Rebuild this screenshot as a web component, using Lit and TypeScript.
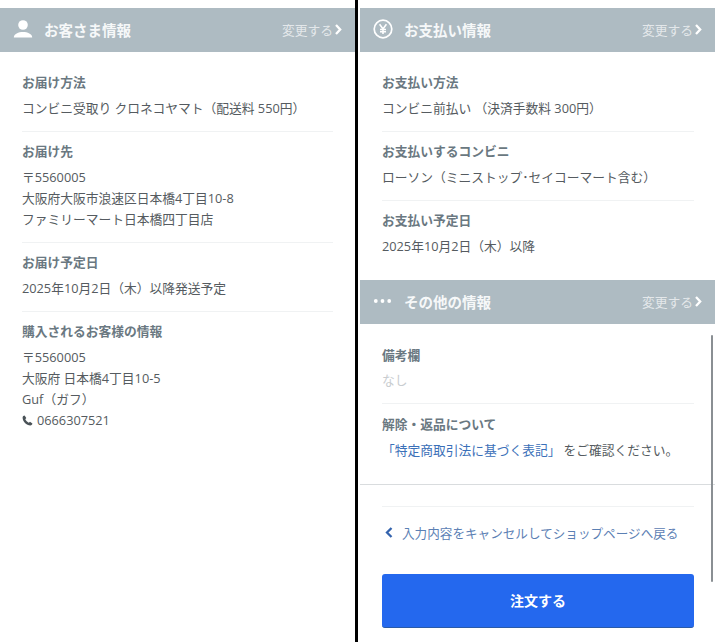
import { LitElement, html, css, nothing, TemplateResult } from 'lit';
import { customElement, property } from 'lit/decorators.js';

const userIcon = html`<svg width="20" height="20" viewBox="0 0 20 20" fill="#fff">
  <circle cx="10" cy="6" r="4.800" />
  <path d="M.8 18.500c0-3.800 4.700-5.600 9.200-5.600s9.200 1.800 9.200 5.600z" />
</svg>`;

const yenIcon = html`<svg width="20" height="20" viewBox="0 0 20 20" fill="none" stroke="#fff">
  <circle cx="10" cy="10" r="8.800" stroke-width="1.700" />
  <path d="M6.600 5.300 10 10l3.400-4.700M10 10v5M7 10.500h6M7 12.700h6" stroke-width="1.600" />
</svg>`;

const dotsIcon = html`<svg width="20" height="20" viewBox="0 0 20 20" fill="#fff">
  <circle cx="2.800" cy="10" r="1.900" />
  <circle cx="9.500" cy="10" r="1.900" />
  <circle cx="16.200" cy="10" r="1.900" />
</svg>`;

const phoneIcon = html`<svg class="phone" width="11" height="11" viewBox="0 0 11 11" fill="#4a5257">
  <path d="M2.600.6 4.300 3 3.300 4.200c.6 1.400 2 2.800 3.500 3.500L8 6.700l2.400 1.700c0 .9-.9 2-2 2C4.400 10.400.6 6.600.6 2.600c0-1.100 1.100-2 2-2z" />
</svg>`;

@customElement('info-section')
export class InfoSection extends LitElement {
  static styles = css`
    :host {
      display: block;
    }
    .head {
      height: 44px;
      box-sizing: border-box;
      background: #aebbc2;
      display: flex;
      align-items: center;
      padding: 0 13px 2px;
      color: #fff;
    }
    .head svg {
      flex: none;
    }
    .title {
      margin-left: 11px;
      font-size: 14.5px;
      font-weight: 700;
      flex: 1;
      color: #f6f8f9;
    }
    .change {
      font-size: 12.750px;
      color: rgba(255, 255, 255, 0.68);
      display: flex;
      align-items: center;
      gap: 2px;
    }
    .change svg {
      display: block;
    }
  `;

  @property() heading = '';
  @property({ attribute: false }) icon: TemplateResult | typeof nothing = nothing;

  render() {
    return html`
      <div class="head">
        ${this.icon}
        <span class="title">${this.heading}</span>
        <span class="change">
          変更する
          <svg width="7" height="11" viewBox="0 0 7 11" fill="none" stroke="#fff" stroke-width="2.300">
            <path d="M1 1 5.200 5.500 1 10" />
          </svg>
        </span>
      </div>
      <slot></slot>
    `;
  }
}

@customElement('app-root')
export class AppRoot extends LitElement {
  static styles = css`
    :host {
      display: block;
      width: 715px;
      height: 642px;
      overflow: hidden;
      font-family: 'Open Sans', 'Noto Sans CJK JP', sans-serif;
      font-size: 12px;
      color: #555b60;
      background: #fff;
    }
    .page {
      display: grid;
      grid-template-columns: 355px 360px;
      height: 642px;
    }
    .pane {
      padding-top: 8px;
      position: relative;
      height: 634px;
    }
    .pane.right {
      border-left: 3px solid #000;
      padding-left: 2px;
    }
    .body {
      padding: 20px 22px 0;
    }
    .right .body {
      padding-right: 21px;
    }
    .row {
      padding-bottom: 12px;
      margin-bottom: 9px;
      border-bottom: 1px solid #f0f2f3;
    }
    .row.last {
      border-bottom: 0;
      padding-bottom: 0;
      margin-bottom: 0;
    }
    .label {
      font-size: 12.750px;
      font-weight: 700;
      color: #6a7881;
      line-height: 21px;
      margin-bottom: 5px;
    }
    .value {
      font-size: 12.750px;
      line-height: 21px;
    }
    .muted {
      color: #c9cdd0;
    }
    a {
      color: #3b70b8;
      text-decoration: none;
    }
    .note {
      margin-left: 3px;
    }
    .phone {
      margin-right: 4px;
      vertical-align: -1px;
    }
    .others {
      margin-top: 23px;
    }
    .right .others .body {
      padding-top: 21px;
    }
    .others .row {
      margin-bottom: 10px;
    }
    .others .row:first-child .label {
      margin-bottom: 4px;
    }
    .footer {
      margin-top: 23px;
      border-top: 1px solid #d9dcde;
      padding: 21px 21px 0 22px;
    }
    .cancel {
      border-top: 1px solid #f0f2f3;
      padding: 15px 0 0 3px;
      display: flex;
      align-items: center;
      gap: 9px;
      height: 21px;
      font-size: 12.600px;
      color: #5b80b4;
    }
    .submit {
      margin-top: 31px;
      height: 54px;
      border-radius: 3px;
      background: #2468ee;
      border-bottom: 1px solid #2a5aa8;
      box-sizing: border-box;
      padding-bottom: 2px;
      color: #fff;
      font-size: 14px;
      font-weight: 700;
      display: flex;
      align-items: center;
      justify-content: center;
    }
    .scrollbar {
      position: absolute;
      right: 2px;
      top: 335px;
      width: 2px;
      height: 247px;
      background: #8a8f93;
      border-radius: 1px;
    }
  `;

  render() {
    return html`
      <div class="page">
        <div class="pane">
          <info-section heading="お客さま情報" .icon=${userIcon}>
            <div class="body">
              <div class="row">
                <div class="label">お届け方法</div>
                <div class="value">コンビニ受取り クロネコヤマト（配送料 550円）</div>
              </div>
              <div class="row">
                <div class="label">お届け先</div>
                <div class="value">〒5560005<br />大阪府大阪市浪速区日本橋4丁目10-8<br />ファミリーマート日本橋四丁目店</div>
              </div>
              <div class="row">
                <div class="label">お届け予定日</div>
                <div class="value">2025年10月2日（木）以降発送予定</div>
              </div>
              <div class="row last">
                <div class="label">購入されるお客様の情報</div>
                <div class="value">
                  〒5560005<br />大阪府 日本橋4丁目10-5<br />Guf（ガフ）<br />${phoneIcon}0666307521
                </div>
              </div>
            </div>
          </info-section>
        </div>
        <div class="pane right">
          <info-section heading="お支払い情報" .icon=${yenIcon}>
            <div class="body">
              <div class="row">
                <div class="label">お支払い方法</div>
                <div class="value">コンビニ前払い （決済手数料 300円）</div>
              </div>
              <div class="row">
                <div class="label">お支払いするコンビニ</div>
                <div class="value">ローソン（ミニストップ･セイコーマート含む）</div>
              </div>
              <div class="row last">
                <div class="label">お支払い予定日</div>
                <div class="value">2025年10月2日（木）以降</div>
              </div>
            </div>
          </info-section>
          <info-section class="others" heading="その他の情報" .icon=${dotsIcon}>
            <div class="body">
              <div class="row">
                <div class="label">備考欄</div>
                <div class="value muted">なし</div>
              </div>
              <div class="row last">
                <div class="label">解除・返品について</div>
                <div class="value"><a href="#">「特定商取引法に基づく表記」</a><span class="note">をご確認ください。</span></div>
              </div>
            </div>
          </info-section>
          <div class="footer">
            <div class="cancel">
              <svg width="8" height="11" viewBox="0 0 8 11" fill="none" stroke="#3463ad" stroke-width="2.300">
                <path d="M6.500 1 2 5.500l4.500 4.500" />
              </svg>
              入力内容をキャンセルしてショップページへ戻る
            </div>
            <div class="submit">注文する</div>
          </div>
          <div class="scrollbar"></div>
        </div>
      </div>
    `;
  }
}
